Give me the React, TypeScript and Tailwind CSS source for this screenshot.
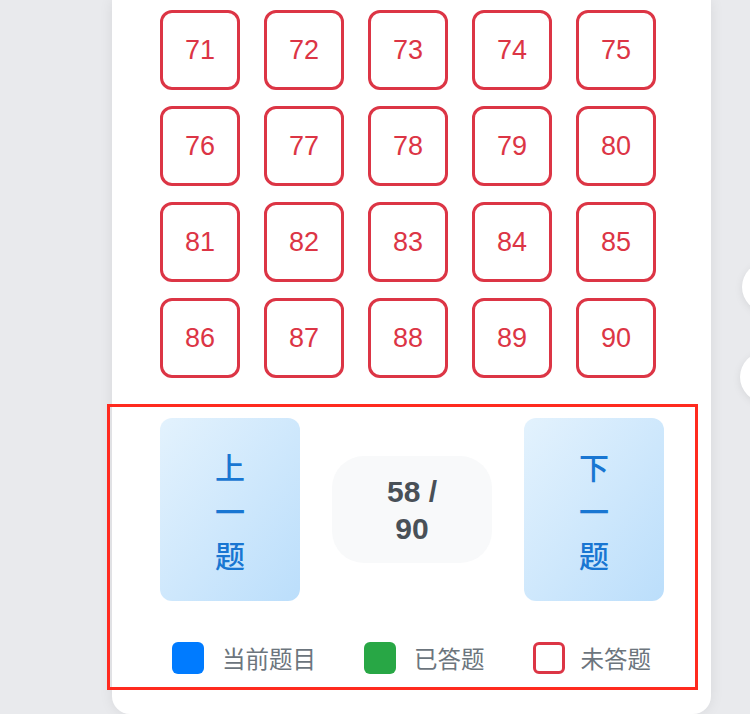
import React from 'react';

const numbers = Array.from({ length: 20 }, (_, i) => 71 + i);

const NavButton: React.FC<{ chars: string[] }> = ({ chars }) => (
    <button className="w-[140px] h-[183px] rounded-[12px] bg-gradient-to-br from-[#e3f2fd] to-[#bbdefb] flex flex-col items-center justify-center text-[#1976d2] text-[30px] leading-[44px] font-medium font-['Noto_Sans_CJK_SC',sans-serif]">
        {chars.map((c) => (
            <span key={c}>{c}</span>
        ))}
    </button>
);

const App: React.FC = () => {
    return (
        <div className="min-h-[714px] h-[714px] overflow-hidden bg-[#e9eaed] relative font-['Liberation_Sans',sans-serif]">
            <div className="relative ml-[112px] w-[599px] h-[714px] bg-white rounded-b-[18px] shadow-[0_0_14px_rgba(0,0,0,0.08)] pl-12 pr-[47px] pt-[10px]">
                {/* question grid */}
                <div className="grid grid-cols-[repeat(5,80px)] gap-x-6 gap-y-4">
                    {numbers.map((n) => (
                        <button
                            key={n}
                            className="w-20 h-20 rounded-[12px] border-[3px] border-[#dc3545] bg-white text-[#dc3545] text-[27px] flex items-center justify-center"
                        >
                            {n}
                        </button>
                    ))}
                </div>

                {/* navigation */}
                <div className="mt-10 flex items-center justify-between">
                    <NavButton chars={['上', '一', '题']} />
                    <div className="w-[160px] h-[107px] rounded-[32px] bg-[#f8f9fa] px-[36px] flex items-center justify-center text-center text-[30px] leading-[37px] font-bold text-[#495057]">
                        58 / 90
                    </div>
                    <NavButton chars={['下', '一', '题']} />
                </div>

                {/* legend */}
                <div className="mt-[41px] ml-[-1px] flex items-center justify-center gap-[48px] text-[23.5px] leading-[32px] text-[#6c757d] font-['Noto_Sans_CJK_SC',sans-serif]">
                    <div className="flex items-center gap-[18px]">
                        <span className="w-8 h-8 rounded-[6px] bg-[#007bff]" />
                        <span>当前题目</span>
                    </div>
                    <div className="flex items-center gap-[18px]">
                        <span className="w-8 h-8 rounded-[6px] bg-[#28a745]" />
                        <span>已答题</span>
                    </div>
                    <div className="flex items-center gap-[16px]">
                        <span className="w-8 h-8 rounded-[6px] border-[3px] border-[#dc3545] bg-white" />
                        <span>未答题</span>
                    </div>
                </div>

                {/* highlight overlay */}
                <div className="absolute top-[404px] left-[-5px] w-[591px] h-[286px] border-[3px] border-[#ff2a1f] pointer-events-none" />
            </div>

            {/* floating side buttons, cut off at the edge */}
            <div className="absolute left-[742px] top-[262px] w-[50px] h-[50px] rounded-full bg-white shadow-[0_2px_8px_rgba(0,0,0,0.08)]" />
            <div className="absolute left-[740px] top-[352px] w-[50px] h-[50px] rounded-full bg-white shadow-[0_2px_8px_rgba(0,0,0,0.08)]" />
        </div>
    );
};

export default App;
